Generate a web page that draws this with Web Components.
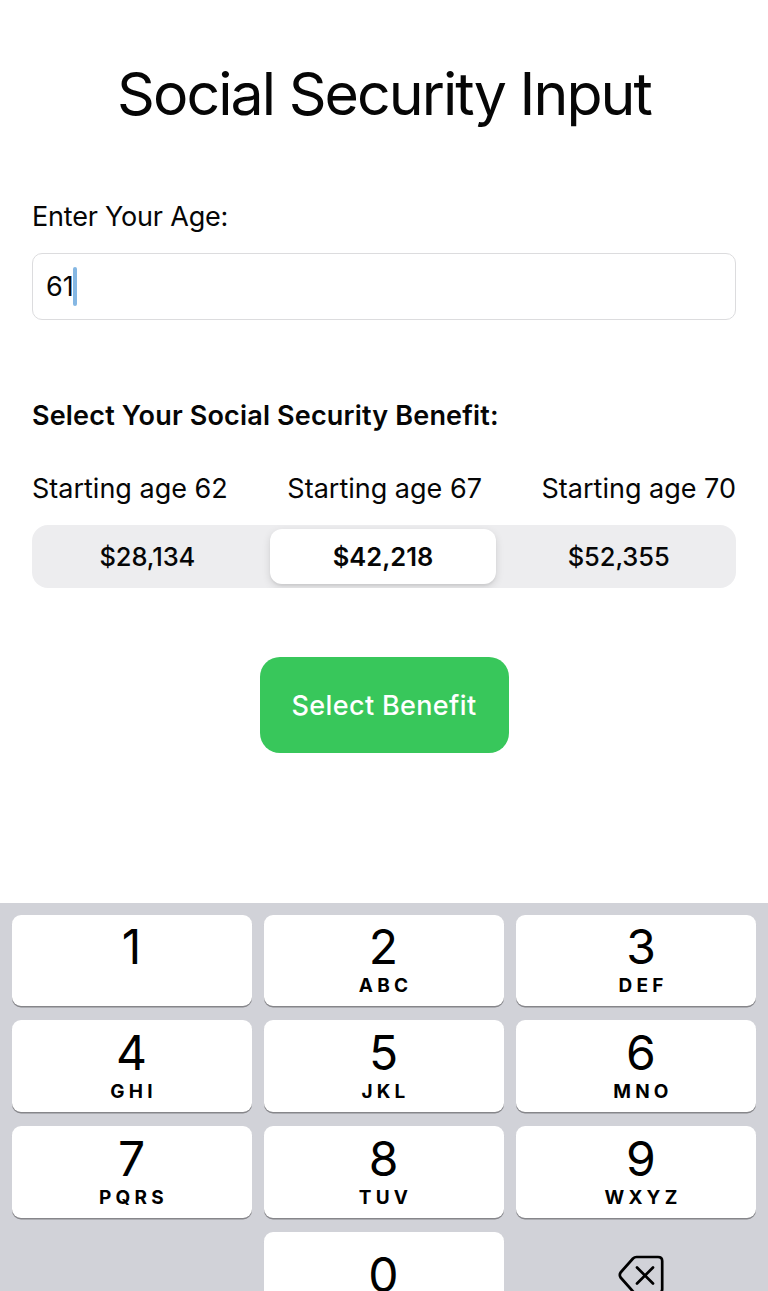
<!DOCTYPE html>
<html lang="en">
<head>
<meta charset="utf-8">
<title>Social Security Input</title>
<style>
  body {
    margin: 0;
    background: #fff;
    color: #060606;
    font-family: Inter, "Liberation Sans", sans-serif;
  }
</style>
</head>
<body>
<benefit-page></benefit-page>

<script>
/**
 * Creates a template from a string of markup.
 *
 * @param {string} html - The markup.
 * @returns {HTMLTemplateElement} The template.
 */
const createTemplate = html => {
  const template = document.createElement('template')
  template.innerHTML = html
  return template
}

/**
 * Registers an element that only shows its template.
 *
 * @param {string} name - The tag name.
 * @param {string} html - The markup of the shadow root.
 */
const defineElement = (name, html) => {
  const template = createTemplate(html)
  customElements.define(name, class extends HTMLElement {
    /**
     * Creates an instance of the current type.
     */
    constructor () {
      super()
      this.attachShadow({ mode: 'open' })
        .appendChild(template.content.cloneNode(true))
    }
  })
}

defineElement('age-field', `
  <style>
    :host {
      display: block;
    }
    .label {
      font-size: 27px;
      line-height: 34px;
      letter-spacing: -0.2px;
    }
    .box {
      display: flex;
      align-items: center;
      box-sizing: border-box;
      height: 67px;
      margin-top: 19px;
      padding: 0 13px;
      border: 1px solid #dcdcde;
      border-radius: 10px;
      font-size: 27px;
    }
    .caret {
      width: 4px;
      height: 39px;
      margin-left: -1px;
      border-radius: 2px;
      background: #85b7e3;
    }
  </style>
  <div class="label"><slot name="label"></slot></div>
  <div class="box"><slot></slot><span class="caret"></span></div>
`)

defineElement('benefit-option', `
  <style>
    :host {
      display: flex;
      align-items: center;
      justify-content: center;
      height: 55px;
      border-radius: 12px;
      font-size: 25.5px;
      font-weight: 500;
      letter-spacing: -0.1px;
    }
    :host([selected]) {
      background: #fff;
      font-weight: 600;
      letter-spacing: 0;
      box-shadow: 0 3px 8px rgba(0, 0, 0, 0.12), 0 2px 2px rgba(0, 0, 0, 0.05);
    }
  </style>
  <slot></slot>
`)

defineElement('segmented-control', `
  <style>
    :host {
      display: grid;
      grid-template-columns: repeat(3, 1fr);
      gap: 9px;
      box-sizing: border-box;
      height: 62.5px;
      padding: 4px 4px 3px 2px;
      border-radius: 16px;
      background: #ededef;
      overflow: hidden;
    }
  </style>
  <slot></slot>
`)

defineElement('submit-button', `
  <style>
    :host {
      display: block;
    }
    button {
      display: block;
      width: 249px;
      height: 96px;
      padding: 0;
      border: none;
      border-radius: 20px;
      background: #38c75b;
      color: #fff;
      font: 500 27px Inter, "Liberation Sans", sans-serif;
      letter-spacing: 0.35px;
    }
  </style>
  <button type="button"><slot></slot></button>
`)

defineElement('pad-key', `
  <style>
    :host {
      display: flex;
      flex-direction: column;
      align-items: center;
      box-sizing: border-box;
      padding: 7px 1px 0 0;
      border-radius: 9px;
      background: #fff;
      box-shadow: 0 1.5px 0 #86868a;
      color: #000;
      font-size: 48px;
      line-height: 52px;
    }
    :host([top]) {
      padding-top: 6px;
    }
    :host([shifted]) {
      padding-right: 0;
      padding-left: 10px;
    }
    :host([zero]) {
      padding-top: 17px;
    }
    .letters {
      padding-left: 4px;
      font-size: 19px;
      font-weight: 700;
      line-height: 25px;
      letter-spacing: 4.2px;
    }
  </style>
  <slot></slot>
  <div class="letters"><slot name="letters"></slot></div>
`)

defineElement('delete-key', `
  <style>
    :host {
      display: flex;
      justify-content: center;
      padding: 22px 0 0 10px;
    }
    svg {
      display: block;
    }
  </style>
  <svg width="48" height="42" viewBox="0 0 48 42" fill="none" stroke="#000" stroke-width="2.7" stroke-linecap="round" stroke-linejoin="round">
    <path d="M19.500 3H41Q45.200 3 45.200 7V35Q45.200 39 41 39H19.500Q17.500 39 16 37.500L3.600 23.500Q2 21 3.600 18.500L16 4.500Q17.500 3 19.500 3Z"/>
    <path d="M20 13.500L36 29.500M36 13.500L20 29.500"/>
  </svg>
`)

/**
 * Represents the number pad at the bottom of the screen.
 */
customElements.define('number-pad',
  class extends HTMLElement {
    /**
     * Creates an instance of the current type.
     */
    constructor () {
      super()

      const letters = ['', 'ABC', 'DEF', 'GHI', 'JKL', 'MNO', 'PQRS', 'TUV', 'WXYZ']
      const keys = letters.map((text, i) =>
        `<pad-key ${i < 3 ? 'top' : ''} ${i % 3 === 2 ? 'shifted' : ''}>${i + 1}<span slot="letters">${text}</span></pad-key>`)

      this.attachShadow({ mode: 'open' })
        .appendChild(createTemplate(`
          <style>
            :host {
              display: grid;
              grid-template-columns: repeat(3, 1fr);
              grid-template-rows: 90.5px 92px 92px 92px;
              gap: 14.25px 12px;
              box-sizing: border-box;
              padding: 12px 12px 0;
              background: #d1d2d8;
              overflow: hidden;
            }
          </style>
          ${keys.join('')}
          <span></span>
          <pad-key zero>0</pad-key>
          <delete-key></delete-key>
        `).content)
    }
  }
)

defineElement('benefit-page', `
  <style>
    :host {
      display: flex;
      flex-direction: column;
      height: 1291px;
      overflow: hidden;
    }
    main {
      display: flex;
      flex-direction: column;
      box-sizing: border-box;
      height: 903px;
      flex: none;
      padding: 58px 32px 0;
    }
    h1 {
      margin: 0;
      font-size: 59px;
      font-weight: 400;
      line-height: 72px;
      letter-spacing: -1.95px;
      text-align: center;
      white-space: nowrap;
    }
    age-field {
      margin-top: 70px;
    }
    h2 {
      margin: 79px 0 0;
      font-size: 27px;
      font-weight: 600;
      line-height: 34px;
      letter-spacing: 0.17px;
      white-space: nowrap;
    }
    .ages {
      display: flex;
      justify-content: space-between;
      margin: 39px 0 19px;
      font-size: 27px;
      line-height: 34px;
      white-space: nowrap;
    }
    submit-button {
      align-self: center;
      margin-top: 69.5px;
    }
    number-pad {
      flex: 1;
      min-height: 0;
    }
  </style>
  <main>
    <h1>Social Security Input</h1>
    <age-field><span slot="label">Enter Your Age:</span>61</age-field>
    <h2>Select Your Social Security Benefit:</h2>
    <div class="ages">
      <span>Starting age 62</span>
      <span>Starting age 67</span>
      <span>Starting age 70</span>
    </div>
    <segmented-control>
      <benefit-option>$28,134</benefit-option>
      <benefit-option selected>$42,218</benefit-option>
      <benefit-option>$52,355</benefit-option>
    </segmented-control>
    <submit-button>Select Benefit</submit-button>
  </main>
  <number-pad></number-pad>
`)
</script>
</body>
</html>
